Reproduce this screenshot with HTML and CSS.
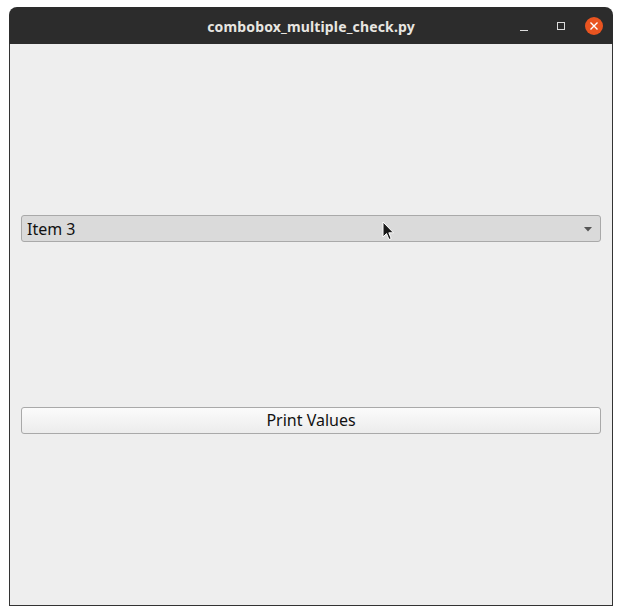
FILE: index.html
```html
<!DOCTYPE html>
<html>
<head>
<meta charset="utf-8">
<link rel="stylesheet" href="styles.css">
</head>
<body>
<div class="window">
  <div class="titlebar">
    <div class="title">combobox_multiple_check.py</div>
    <div class="controls">
      <span class="ctl min"><svg width="10" height="10" viewBox="0 0 10 10"><rect x="1" y="8" width="8" height="1" fill="#dcdcdc"/></svg></span>
      <span class="ctl max"><svg width="10" height="10" viewBox="0 0 10 10"><rect x="1.5" y="1.5" width="7" height="7" fill="none" stroke="#dcdcdc" stroke-width="1"/></svg></span>
      <span class="ctl close"><svg width="18" height="18" viewBox="0 0 18 18"><circle cx="9" cy="9" r="9" fill="#e95420"/><path d="M5.5 5.5 L12.5 12.5 M12.5 5.5 L5.5 12.5" stroke="#fff" stroke-width="1.4"/></svg></span>
    </div>
  </div>
  <div class="content">
    <div class="combo">
      <span class="combo-text">Item 3</span>
      <svg class="arrow" width="8" height="5" viewBox="0 0 8 5"><path d="M0 0 H8 L4 4.5 Z" fill="#555"/></svg>
      <svg class="cursor" width="14" height="20" viewBox="0 0 14 20"><path d="M1 1 L1 16 L4.5 12.5 L7 18.5 L9.2 17.6 L6.8 11.8 L11.5 11.8 Z" fill="#1a1a1a" stroke="#fff" stroke-width="1"/></svg>
    </div>
    <button class="btn">Print Values</button>
  </div>
</div>
</body>
</html>
```

FILE: styles.css
```css
html, body {
  margin: 0;
  padding: 0;
  background: #ffffff;
}
body {
  width: 622px;
  height: 615px;
  overflow: hidden;
}
.window {
  margin: 7px 0 0 9px;
  width: 604px;
  height: 599px;
  box-sizing: border-box;
  display: flex;
  flex-direction: column;
  border-radius: 8px 8px 0 0;
  overflow: hidden;
}
.titlebar {
  height: 37px;
  background: #2c2c2c;
  position: relative;
  display: flex;
  align-items: center;
  justify-content: center;
  flex: none;
}
.title {
  font-family: "Noto Sans", "DejaVu Sans", sans-serif;
  font-weight: bold;
  font-size: 14px;
  color: #e8e6e1;
  letter-spacing: 0.15px;
  margin-top: 1px;
}
.controls {
  position: absolute;
  right: 10px;
  top: 0;
  height: 37px;
  display: flex;
  align-items: center;
}
.ctl {
  display: flex;
  align-items: center;
  justify-content: center;
}
.min { width: 10px; margin-right: 27px; margin-top: 2px; }
.max { width: 10px; margin-right: 19px; }
.close { width: 18px; }
.content {
  flex: 1;
  background: #eeeeee;
  border: 1px solid #333333;
  border-top: none;
  padding: 171px 11px 0 11px;
  display: flex;
  flex-direction: column;
  gap: 165px;
}
.combo {
  position: relative;
  height: 27px;
  box-sizing: border-box;
  border: 1px solid #a9a9a9;
  border-radius: 3px;
  background: #dadada;
  display: flex;
  align-items: center;
  padding: 0 8px 0 5px;
}
.combo-text {
  flex: 1;
  font-family: "Noto Sans", "DejaVu Sans", sans-serif;
  font-size: 16px;
  color: #111;
}
.arrow {
  margin-top: 1px;
}
.cursor {
  position: absolute;
  left: 360px;
  top: 5px;
}
.btn {
  height: 27px;
  box-sizing: border-box;
  border: 1px solid #a9a9a9;
  border-radius: 3px;
  background: linear-gradient(#fbfbfb, #ececec);
  font-family: "Noto Sans", "DejaVu Sans", sans-serif;
  font-size: 16px;
  color: #111;
  padding: 0 0 2px 0;
  margin: 0;
}
```
